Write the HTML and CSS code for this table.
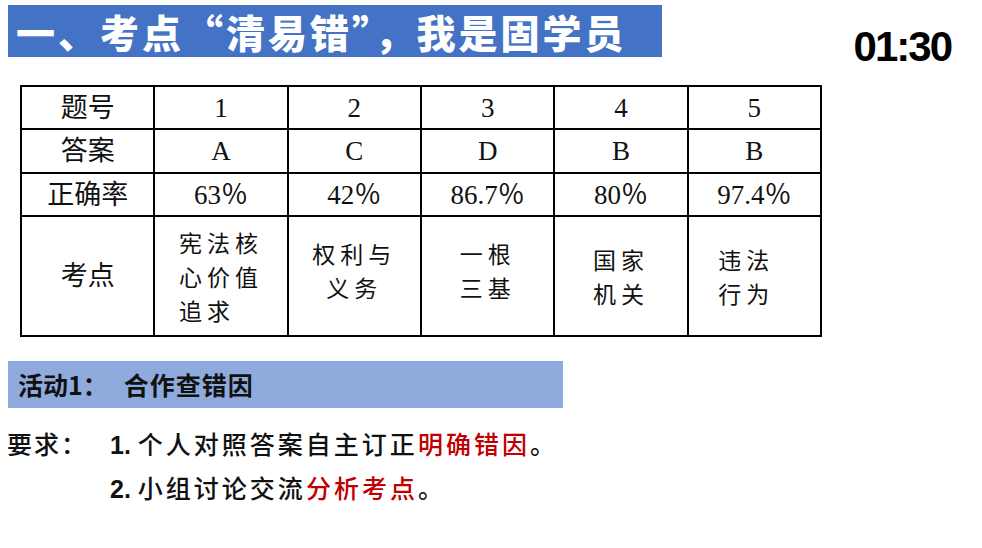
FILE: index.html
```html
<!DOCTYPE html>
<html lang="zh">
<head>
<meta charset="utf-8">
<link rel="stylesheet" href="styles.css">
</head>
<body>
<div class="page">
  <header class="top">
    <h1 class="title">一、考点“清易错”，我是固学员</h1>
    <div class="timer">01:30</div>
  </header>

  <table class="quiz">
    <tr class="r1">
      <td>题号</td><td>1</td><td>2</td><td>3</td><td>4</td><td>5</td>
    </tr>
    <tr class="r2">
      <td>答案</td><td>A</td><td>C</td><td>D</td><td>B</td><td>B</td>
    </tr>
    <tr class="r3">
      <td>正确率</td><td>63％</td><td>42％</td><td>86.7％</td><td>80％</td><td>97.4％</td>
    </tr>
    <tr class="r4">
      <td>考点</td>
      <td><span class="pt pt-left">宪法核<br>心价值<br>追求</span></td>
      <td><span class="pt pt-up">权利与<br>义务</span></td>
      <td><span class="pt pt-up">一根<br>三基</span></td>
      <td><span class="pt">国家<br>机关</span></td>
      <td><span class="pt pt-shift">违法<br>行为</span></td>
    </tr>
  </table>

  <div class="activity">活动1：<span class="activity-name">合作查错因</span></div>

  <div class="req">
    <div class="req-label">要求：</div>
    <div class="req-items">
      <p class="req-line"><span class="num">1.</span>个人对照答案自主订正<span class="red">明确错因</span>。</p>
      <p class="req-line"><span class="num">2.</span>小组讨论交流<span class="red">分析考点</span>。</p>
    </div>
  </div>
</div>
</body>
</html>
```

FILE: styles.css
```css
* { box-sizing: border-box; }
html, body { margin: 0; padding: 0; background: #fff; }
body { width: 982px; height: 548px; overflow: hidden; }

.page { display: flex; flex-direction: column; }

.top {
  display: flex;
  align-items: flex-start;
  justify-content: space-between;
  padding-top: 5px;
}

.title {
  margin: 0 0 0 8px;
  width: 654px;
  height: 52px;
  background: #4472c4;
  color: #fff;
  font-family: "Noto Sans CJK SC", sans-serif;
  font-weight: 900;
  font-size: 39px;
  line-height: 52px;
  padding-left: 8px;
  letter-spacing: 3px;
  white-space: nowrap;
}

.timer {
  margin: 20px 31px 0 0;
  font-family: "Liberation Sans", Arial, sans-serif;
  font-weight: bold;
  font-size: 42px;
  line-height: 44px;
  letter-spacing: -2px;
  color: #000;
}

.quiz {
  margin: 16px 0 0 20px;
  width: 802px;
  border-collapse: collapse;
  table-layout: fixed;
  font-family: "Liberation Serif", "Noto Sans CJK SC", serif;
  font-size: 27px;
  color: #111;
}
.quiz td {
  border: 2px solid #000;
  text-align: center;
  vertical-align: middle;
  padding: 0;
  line-height: 30px;
}
.r1 td { height: 43px; }
.r2 td { height: 44px; }
.r3 td { height: 43px; }
.r4 td { height: 120px; }

.pt {
  display: inline-block;
  font-family: "Noto Sans CJK SC", sans-serif;
  font-size: 23px;
  line-height: 34px;
  letter-spacing: 5px;
  text-align: center;
}
.pt-left { text-align: left; }
.pt-up { position: relative; top: -6px; }
.pt-shift { position: relative; right: 8px; }

.activity {
  margin: 24px 0 0 8px;
  width: 555px;
  height: 47px;
  background: #8faadc;
  font-family: "Noto Sans CJK SC", sans-serif;
  font-weight: bold;
  font-size: 25px;
  line-height: 47px;
  padding-left: 10px;
  color: #111;
}
.activity-name { margin-left: 16px; letter-spacing: 1px; }

.req {
  display: flex;
  margin: 14px 0 0 7px;
  font-family: "Noto Sans CJK SC", sans-serif;
  font-weight: 500;
  font-size: 25px;
  line-height: 42px;
  color: #111;
}
.req-label { width: 103px; letter-spacing: 2px; }
.req-items { display: flex; flex-direction: column; }
.req-line { margin: 0; letter-spacing: 3px; }
.num {
  font-family: "Liberation Sans", Arial, sans-serif;
  font-weight: bold;
  letter-spacing: 0;
  margin-right: 7px;
}
.red { color: #c00000; }
```
